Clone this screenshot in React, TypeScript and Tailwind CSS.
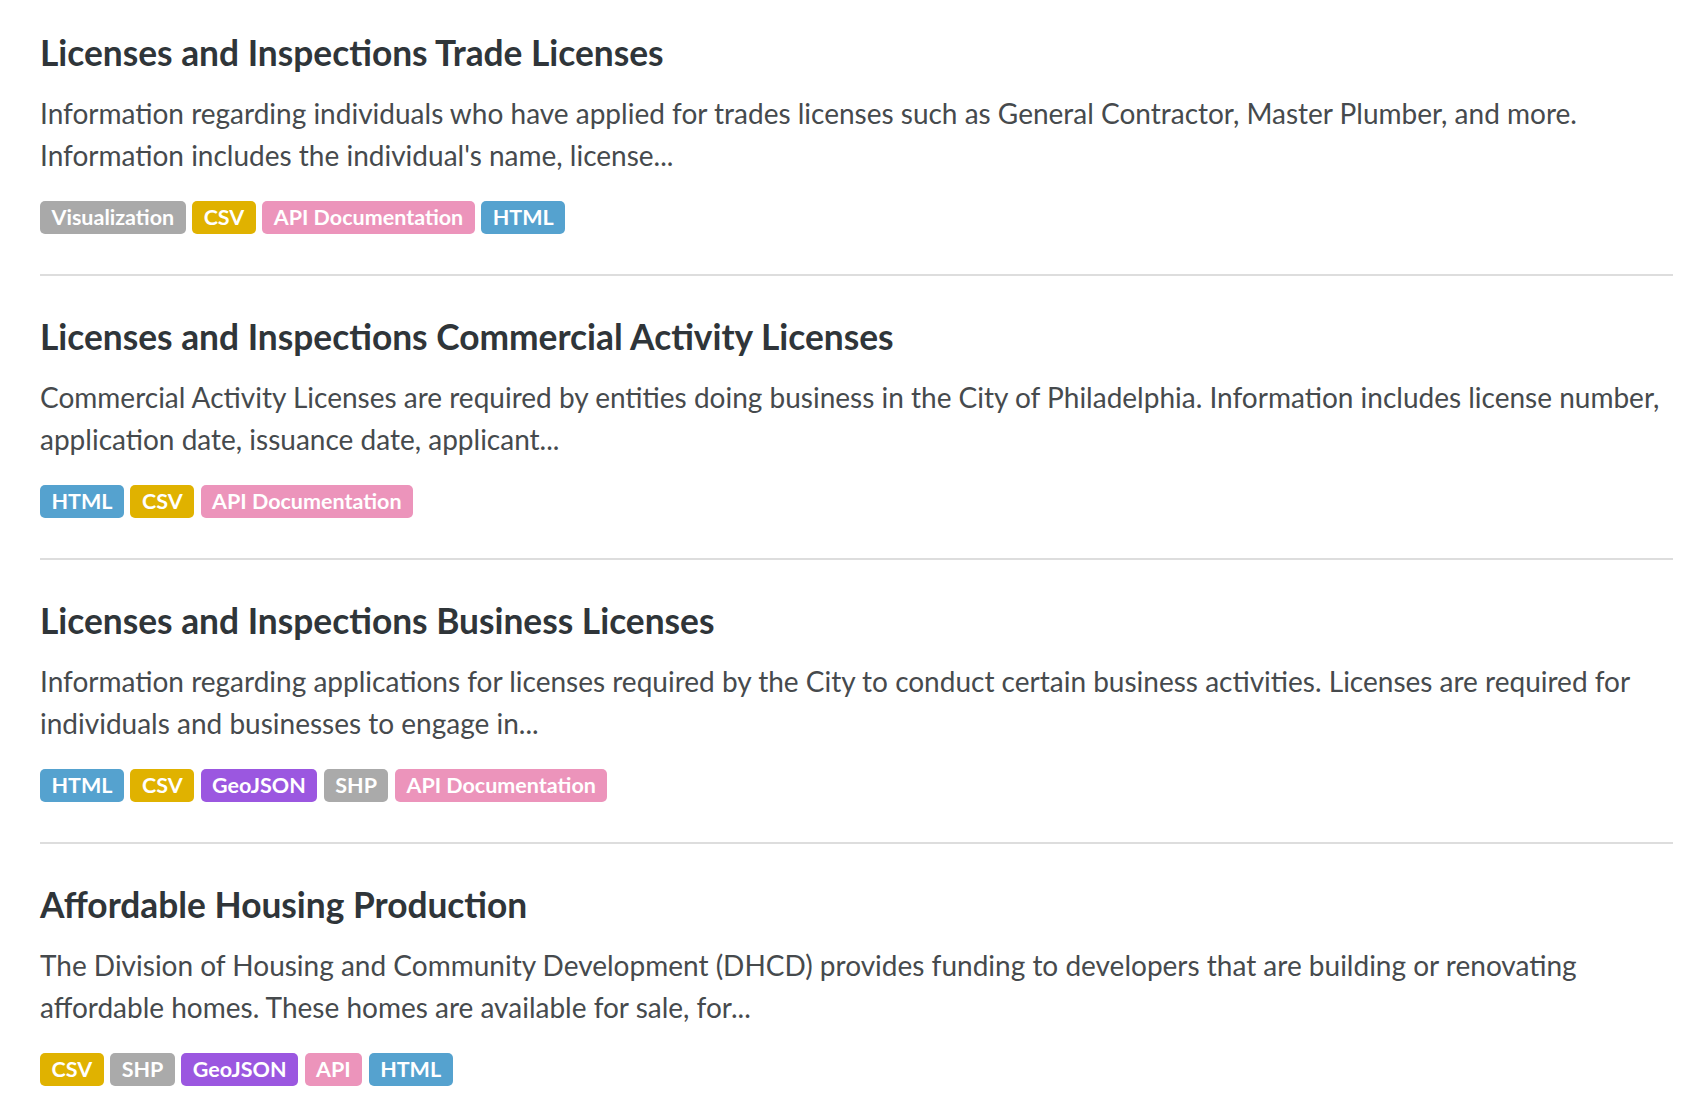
import React from "react";

type Tag = { label: string; color: string };

const C = {
  viz: "bg-[#a9a9a9]",
  csv: "bg-[#e0b200]",
  api: "bg-[#ec94bb]",
  html: "bg-[#55a2cf]",
  geo: "bg-[#9b57e0]",
  shp: "bg-[#aaaaaa]",
};

const items: { title: string; desc: string; tags: Tag[] }[] = [
  {
    title: "Licenses and Inspections Trade Licenses",
    desc: "Information regarding individuals who have applied for trades licenses such as General Contractor, Master Plumber, and more. Information includes the individual's name, license...",
    tags: [
      { label: "Visualization", color: C.viz },
      { label: "CSV", color: C.csv },
      { label: "API Documentation", color: C.api },
      { label: "HTML", color: C.html },
    ],
  },
  {
    title: "Licenses and Inspections Commercial Activity Licenses",
    desc: "Commercial Activity Licenses are required by entities doing business in the City of Philadelphia. Information includes license number, application date, issuance date, applicant...",
    tags: [
      { label: "HTML", color: C.html },
      { label: "CSV", color: C.csv },
      { label: "API Documentation", color: C.api },
    ],
  },
  {
    title: "Licenses and Inspections Business Licenses",
    desc: "Information regarding applications for licenses required by the City to conduct certain business activities. Licenses are required for individuals and businesses to engage in...",
    tags: [
      { label: "HTML", color: C.html },
      { label: "CSV", color: C.csv },
      { label: "GeoJSON", color: C.geo },
      { label: "SHP", color: C.shp },
      { label: "API Documentation", color: C.api },
    ],
  },
  {
    title: "Affordable Housing Production",
    desc: "The Division of Housing and Community Development (DHCD) provides funding to developers that are building or renovating affordable homes. These homes are available for sale, for...",
    tags: [
      { label: "CSV", color: C.csv },
      { label: "SHP", color: C.shp },
      { label: "GeoJSON", color: C.geo },
      { label: "API", color: C.api },
      { label: "HTML", color: C.html },
    ],
  },
];

export default function App() {
  return (
    <div
      className="min-h-[1120px] bg-white pl-[40px] pr-[35px] pt-[32px]"
      style={{ fontFamily: "Lato, 'Open Sans', sans-serif" }}
    >
      {items.map((it, i) => (
        <div
          key={i}
          className="pt-[40px] first:pt-0 pb-[40px] border-b-2 border-[#dddddd]"
        >
          <h2 className="text-[35.3px] leading-[42px] font-bold text-[#2f3539]">
            {it.title}
          </h2>
          <p className="mt-[18px] text-[28px] leading-[42px] text-[#464a4d]">
            {it.desc}
          </p>
          <div className="mt-[25px] flex gap-[6.5px]">
            {it.tags.map((t, j) => (
              <span
                key={j}
                className={`${t.color} h-[33px] px-[11.5px] rounded-[5px] text-white font-bold text-[21.5px] leading-[33px]`}
              >
                {t.label}
              </span>
            ))}
          </div>
        </div>
      ))}
    </div>
  );
}
